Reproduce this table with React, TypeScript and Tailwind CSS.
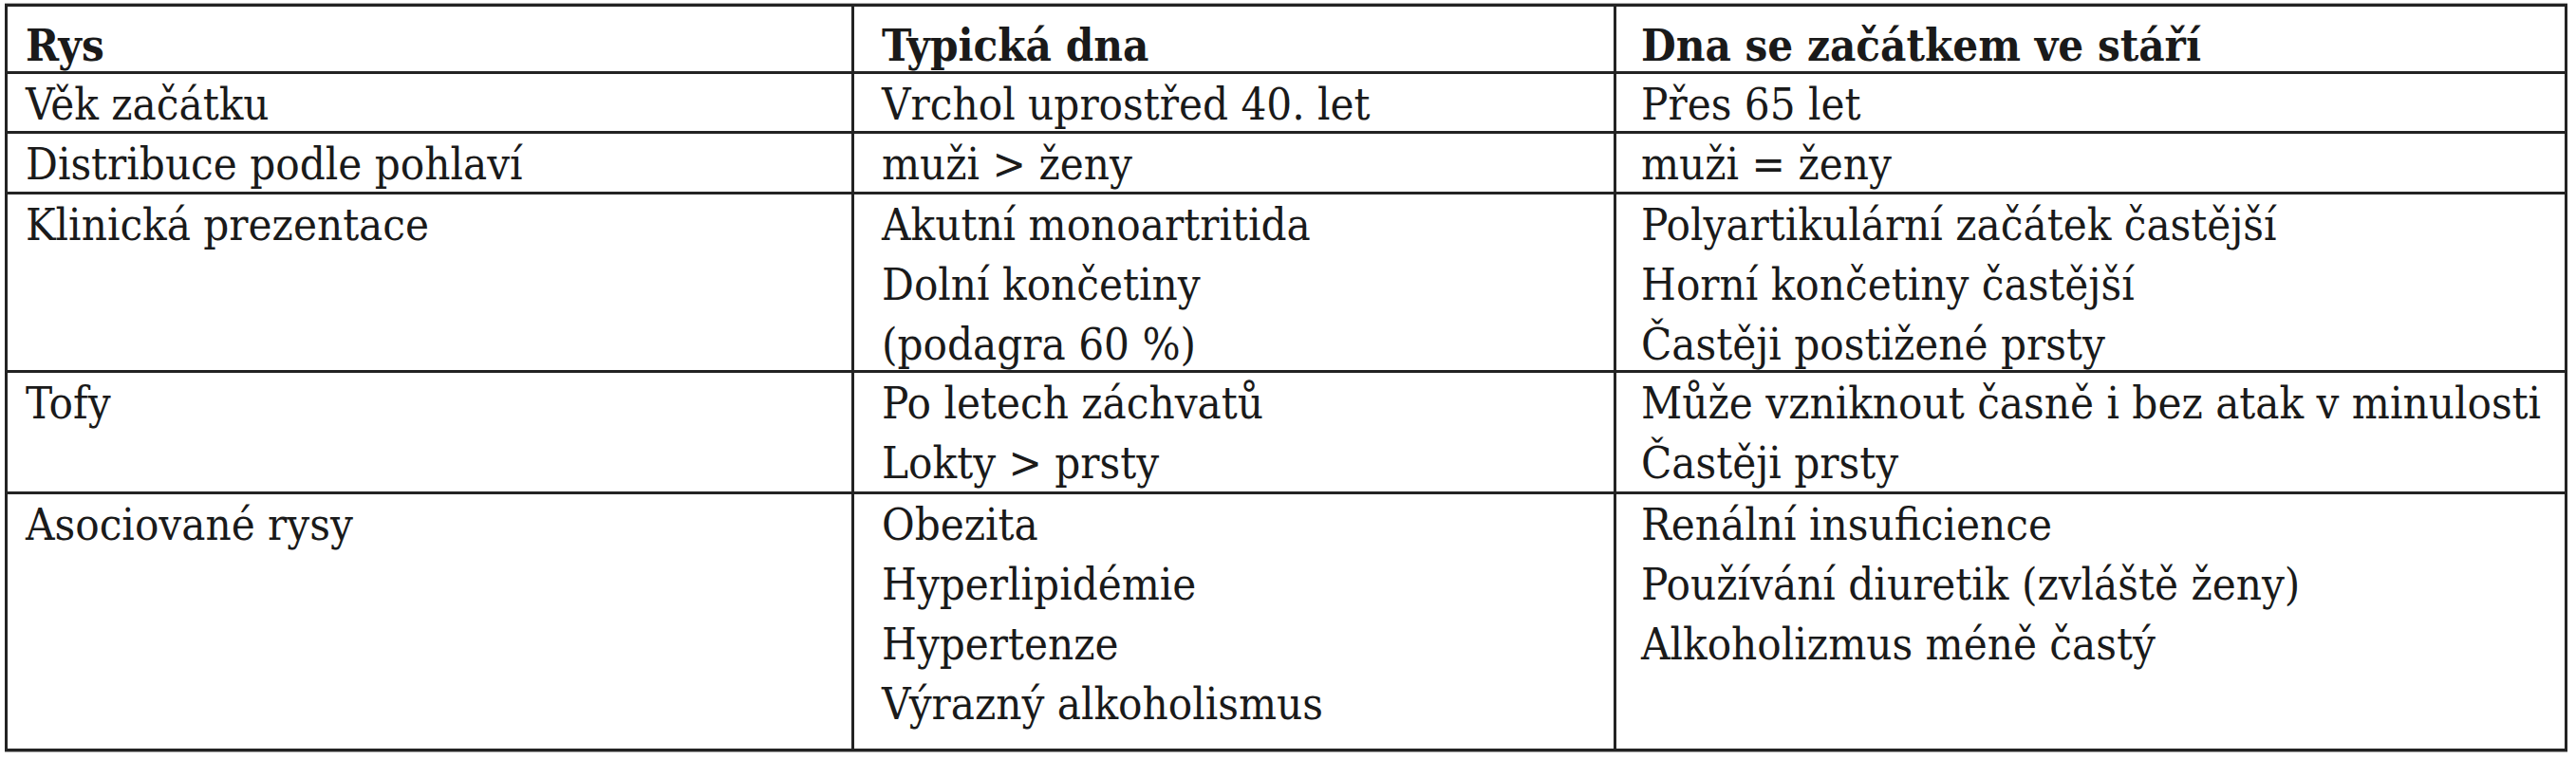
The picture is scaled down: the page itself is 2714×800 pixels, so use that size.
import React from "react";

type Row = {
  cells: string[][];
  h: string;
};

const rows: Row[] = [
  { cells: [["Věk začátku"], ["Vrchol uprostřed 40. let"], ["Přes 65 let"]], h: "h-[63px]" },
  { cells: [["Distribuce podle pohlaví"], ["muži > ženy"], ["muži = ženy"]], h: "h-[64px]" },
  {
    cells: [
      ["Klinická prezentace"],
      ["Akutní monoartritida", "Dolní končetiny", "(podagra 60 %)"],
      ["Polyartikulární začátek častější", "Horní končetiny častější", "Častěji postižené prsty"],
    ],
    h: "h-[188px]",
  },
  {
    cells: [
      ["Tofy"],
      ["Po letech záchvatů", "Lokty > prsty"],
      ["Může vzniknout časně i bez atak v minulosti", "Častěji prsty"],
    ],
    h: "h-[128px]",
  },
  {
    cells: [
      ["Asociované rysy"],
      ["Obezita", "Hyperlipidémie", "Hypertenze", "Výrazný alkoholismus"],
      ["Renální insuficience", "Používání diuretik (zvláště ženy)", "Alkoholizmus méně častý"],
    ],
    h: "h-[271px]",
  },
];

const padX = ["pl-[19px]", "pl-[29px]", "pl-[26px]"];
const borderL = ["", "border-l-[3px] border-[#232323]", "border-l-[3px] border-[#232323]"];

export default function App() {
  return (
    <div className="w-[2714px] h-[800px] bg-white pt-[4px] pl-[5px]">
      <div
        className="w-[2700px] border-[3px] border-[#232323] text-[#1a1a1a] text-[47px] shadow-[0_1px_0_#9a9a9a,0_-1px_0_#b0b0b0]"
        style={{ fontFamily: '"DejaVu Serif Condensed", "Liberation Serif", serif' }}
      >
        <div className="grid grid-cols-[889px_803px_1fr] h-[68px] font-bold">
          {["Rys", "Typická dna", "Dna se začátkem ve stáří"].map((t, i) => (
            <div key={i} className={`${borderL[i]} ${padX[i]} pt-[12px] leading-[57px] whitespace-nowrap`}>
              {t}
            </div>
          ))}
        </div>
        {rows.map((r, ri) => (
          <div key={ri} className={`grid grid-cols-[889px_803px_1fr] ${r.h} border-t-[3px] border-[#232323]`}>
            {r.cells.map((lines, ci) => (
              <div key={ci} className={`${borderL[ci]} ${padX[ci]} leading-[63px] whitespace-nowrap`}>
                {lines.map((l, li) => (
                  <div key={li}>{l}</div>
                ))}
              </div>
            ))}
          </div>
        ))}
      </div>
    </div>
  );
}
